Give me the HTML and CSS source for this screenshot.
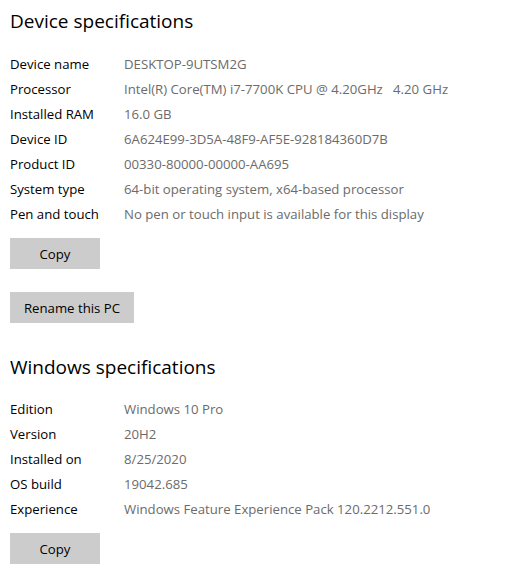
FILE: index.html
```html
<!DOCTYPE html>
<html lang="en">
<head>
<meta charset="utf-8">
<title>About</title>
<link rel="stylesheet" href="styles.css">
</head>
<body>
<main class="page">
  <section class="section">
    <h2 class="section-title">Device specifications</h2>
    <dl class="spec-list">
      <dt>Device name</dt><dd>DESKTOP-9UTSM2G</dd>
      <dt>Processor</dt><dd>Intel(R) Core(TM) i7-7700K CPU @ 4.20GHz&nbsp;&nbsp;&nbsp;4.20 GHz</dd>
      <dt>Installed RAM</dt><dd>16.0 GB</dd>
      <dt>Device ID</dt><dd>6A624E99-3D5A-48F9-AF5E-928184360D7B</dd>
      <dt>Product ID</dt><dd>00330-80000-00000-AA695</dd>
      <dt>System type</dt><dd>64-bit operating system, x64-based processor</dd>
      <dt>Pen and touch</dt><dd>No pen or touch input is available for this display</dd>
    </dl>
    <button class="btn btn-copy" type="button">Copy</button>
    <button class="btn btn-rename" type="button">Rename this PC</button>
  </section>
  <section class="section">
    <h2 class="section-title">Windows specifications</h2>
    <dl class="spec-list">
      <dt>Edition</dt><dd>Windows 10 Pro</dd>
      <dt>Version</dt><dd>20H2</dd>
      <dt>Installed on</dt><dd>8/25/2020</dd>
      <dt>OS build</dt><dd>19042.685</dd>
      <dt>Experience</dt><dd>Windows Feature Experience Pack 120.2212.551.0</dd>
    </dl>
    <button class="btn btn-copy" type="button">Copy</button>
  </section>
</main>
</body>
</html>
```
FILE: styles.css
```css
html, body {
  margin: 0;
  background: #ffffff;
}

.page {
  padding: 7px 10px 0;
  font-family: "Open Sans", "Noto Sans", sans-serif;
  font-size: 13.2px;
  color: #000;
}

.section-title {
  margin: 0;
  font-size: 19px;
  font-weight: 400;
  line-height: 28px;
  color: #000;
}

.spec-list {
  display: grid;
  grid-template-columns: 114px auto;
  grid-auto-rows: 25px;
  align-items: center;
  margin: 16px 0 0;
}

.spec-list dt,
.spec-list dd {
  margin: 0;
  white-space: nowrap;
}

.spec-list dd {
  color: #6b6b6b;
}

.btn {
  display: block;
  height: 31px;
  border: 0;
  background: #cccccc;
  font: inherit;
  color: #000;
  padding: 0;
}

.btn-copy {
  width: 90px;
  margin-top: 12px;
}

.btn-rename {
  width: 124px;
  margin-top: 23px;
}

.section + .section {
  margin-top: 30px;
}

.section + .section .spec-list {
  margin-top: 15px;
}
```
